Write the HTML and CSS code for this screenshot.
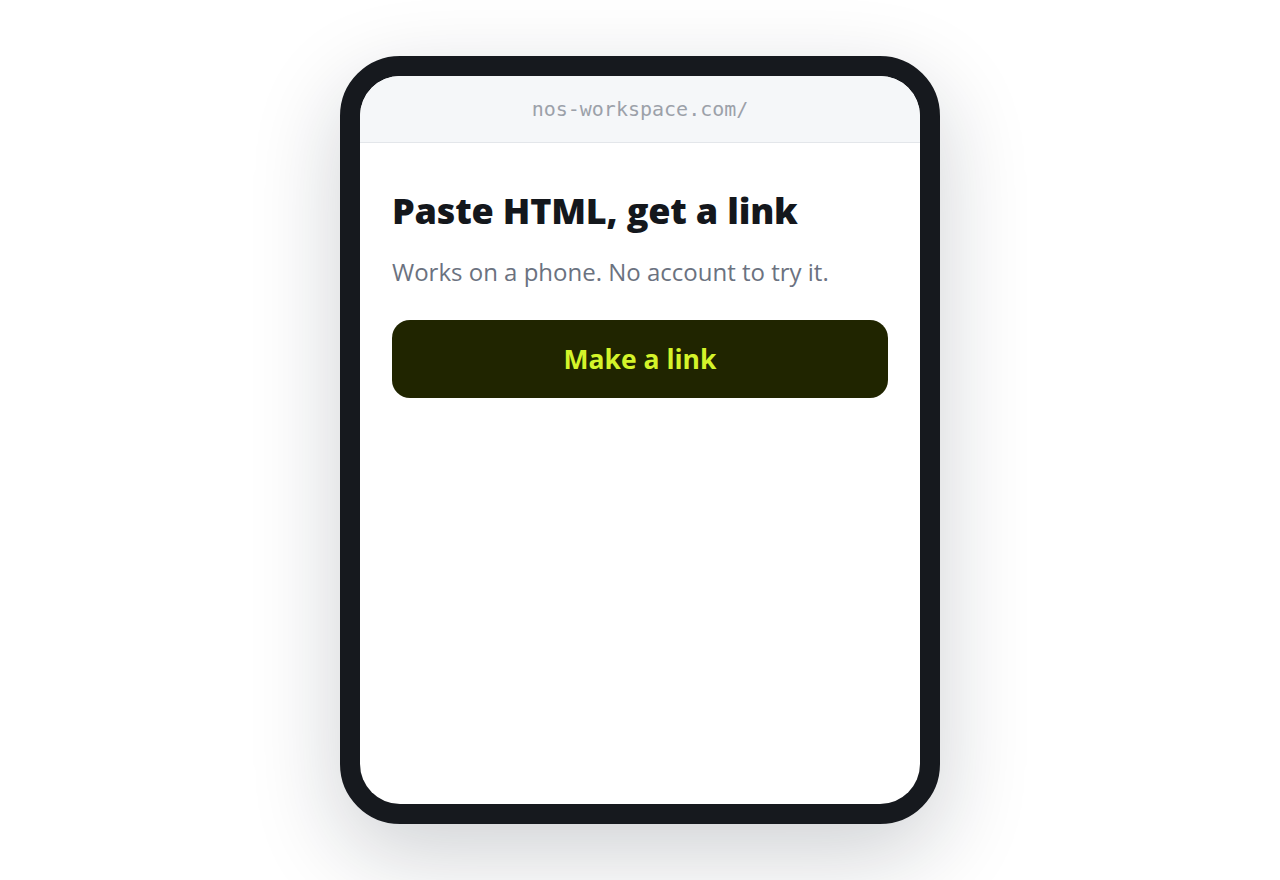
FILE: index.html
```html
<!DOCTYPE html>
<html lang="en">
<head>
<meta charset="utf-8">
<title>Paste HTML, get a link</title>
<link rel="stylesheet" href="styles.css">
</head>
<body>
<main class="stage">
  <div class="phone">
    <div class="screen">
      <div class="urlbar">nos-workspace.com/</div>
      <div class="content">
        <h1 class="title">Paste HTML, get a link</h1>
        <p class="subtitle">Works on a phone. No account to try it.</p>
        <button class="cta" type="button">Make a link</button>
      </div>
    </div>
  </div>
</main>
</body>
</html>
```

FILE: styles.css
```css
html, body {
  margin: 0;
  padding: 0;
  background: #ffffff;
}
body {
  font-family: "Open Sans", "Noto Sans", sans-serif;
}
.stage {
  width: 1280px;
  height: 880px;
  display: flex;
  justify-content: center;
  padding-top: 56px;
  box-sizing: border-box;
}
.phone {
  width: 600px;
  height: 768px;
  box-sizing: border-box;
  border: 20px solid #16191e;
  border-radius: 60px;
  background: #16191e;
  box-shadow: 0 30px 90px rgba(15, 23, 42, 0.2);
}
.screen {
  height: 100%;
  background: #ffffff;
  border-radius: 40px;
  overflow: hidden;
  display: flex;
  flex-direction: column;
}
.urlbar {
  height: 66px;
  flex: none;
  background: #f5f7f9;
  border-bottom: 1px solid #e3e6ea;
  display: flex;
  align-items: center;
  justify-content: center;
  font-family: "DejaVu Sans Mono", "Liberation Mono", monospace;
  font-size: 20px;
  color: #9ca1a9;
}
.content {
  padding: 44px 32px 0;
}
.title {
  margin: 0;
  font-size: 36px;
  line-height: 48px;
  font-weight: 800;
  color: #14171c;
  letter-spacing: -0.2px;
}
.subtitle {
  margin: 21px 0 0;
  font-size: 24px;
  line-height: 32px;
  color: #6b7280;
}
.cta {
  display: block;
  margin-top: 32px;
  width: 100%;
  height: 78px;
  border: none;
  border-radius: 18px;
  background: #202500;
  color: #d4f42a;
  font-family: "Open Sans", "Noto Sans", sans-serif;
  font-size: 26.5px;
  font-weight: 700;
  cursor: pointer;
}
```
